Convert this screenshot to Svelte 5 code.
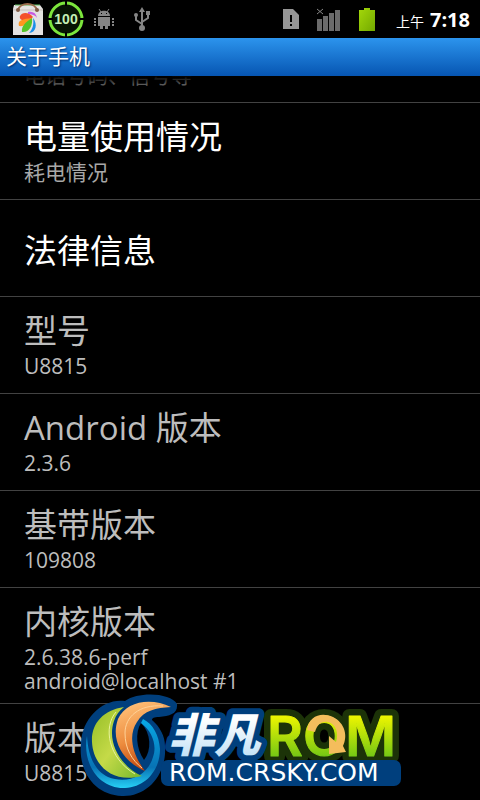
<script>
    const items = [
        { title: "", lines: ["电话号码、信号等"], action: true },
        { title: "电量使用情况", lines: ["耗电情况"], action: true },
        { title: "法律信息", lines: [], action: true },
        { title: "型号", lines: ["U8815"] },
        { title: "Android 版本", lines: ["2.3.6"] },
        { title: "基带版本", lines: ["109808"] },
        { title: "内核版本", lines: ["2.6.38.6-perf", "android@localhost #1"] },
        { title: "版本", lines: ["U8815"] },
    ];
    const ticks = [0, 90, 180, 270];
</script>

<div class="screen">
    <header class="status">
        <div class="icons">
            <svg class="bag" width="32" height="34" viewBox="0 0 32 34">
                <path d="M2 3h26l3 4v26H1V7z" fill="#e4e2e1" />
                <path d="M1 7h30v2H1z" fill="#d5d0ce" />
                <path d="M3 3h25" stroke="#5fb85f" stroke-width="1" />
                <path d="M6 8C8 0 23 0 25 8" fill="none" stroke="#9b6b4c" stroke-width="2" />
                <circle cx="6" cy="8" r="2" fill="#805a45" />
                <circle cx="25" cy="8" r="2" fill="#805a45" />
                <path d="M16 10c5-1 8 1 9 6-2-3-5-4-9-4z" fill="#c65be0" />
                <path d="M18 18C10 20 7 17 8 14C10 10 17 10 21 15z" fill="#f4502c" />
                <path d="M20 16C11 17 5 18 7 24c5 1 10-3 13-8z" fill="#ff961f" />
                <path d="M20 16c-6 4-11 8-10 14 7 1 11-6 10-14z" fill="#54c529" />
                <path d="M21 16c1 6 0 11-4 15 7 0 9-9 4-15z" fill="#1b8fe8" />
            </svg>
            <svg width="36" height="36" viewBox="0 0 36 36">
                <circle cx="18" cy="18" r="16" fill="#071403" stroke="#7ce53c" stroke-width="3" />
                {#each ticks as angle}
                    <path d="M18 0v5" stroke="#000" stroke-width="2" transform="rotate({angle} 18 18)" />
                {/each}
                <text class="charge" x="18" y="23" text-anchor="middle">100</text>
            </svg>
            <svg class="robot" width="20" height="22" viewBox="0 0 20 22" fill="#858585">
                <path d="M4 8c0-7 12-7 12 0z" />
                <path d="M5 1l2 3M15 1l-2 3" stroke="#858585" />
                <path d="M4 9h12v9H4zM6 18h3v3H6zM11 18h3v3h-3z" />
                <path d="M0 10h2v2H0zM0 13h2v2H0zM0 16h2v2H0zM18 10h2v2h-2zM18 13h2v2h-2zM18 16h2v2h-2z" />
                <path d="M7 5h1v1H7zM12 5h1v1h-1z" fill="#000" />
            </svg>
            <svg class="usb" width="16" height="24" viewBox="0 0 16 24">
                <path d="M8 4v16M8 17L2 13V8M8 15l6-4V7" fill="none" stroke="#858585" stroke-width="2" />
                <path d="M8 0l3 5H5zM12 4h4v4h-4z" fill="#858585" />
                <circle cx="2" cy="8" r="2" fill="#858585" />
                <circle cx="8" cy="21" r="3" fill="#858585" />
            </svg>
        </div>
        <div class="icons right">
            <svg width="16" height="20" viewBox="0 0 16 20">
                <path d="M0 0h10l6 6v14H0z" fill="#969696" />
                <path d="M7 6h2v7H7zM7 15h2v2H7z" fill="#000" />
            </svg>
            <svg width="24" height="23" viewBox="0 0 24 23">
                <path d="M0 11h5v12H0zM6 8h5v15H6zM12 5h5v18h-5zM18 2h5v21h-5z" fill="#6b6b6b" />
                <path d="M0 1l6 5M6 1L0 6" stroke="#858585" stroke-width="1" />
            </svg>
            <svg width="16" height="23" viewBox="0 0 16 23">
                <defs>
                    <linearGradient id="cell" x2="1" y2="1">
                        <stop offset="0" stop-color="#a4d80a" />
                        <stop offset="1" stop-color="#73a900" />
                    </linearGradient>
                </defs>
                <path d="M0 2h5V0h6v2h5v21H0z" fill="url(#cell)" />
            </svg>
            <div class="clock"><span>上午</span><b>7:18</b></div>
        </div>
    </header>

    <h1>关于手机</h1>

    <main>
        <ul>
            {#each items as item}
                <li class:action={item.action}>
                    <div class="title">{item.title}</div>
                    {#each item.lines as line}
                        <div class="summary">{line}</div>
                    {/each}
                </li>
            {/each}
        </ul>
    </main>

    <svg class="watermark" width="328" height="110" viewBox="0 0 328 110">
        <defs>
            <linearGradient id="lime" x2="1" y2="1">
                <stop offset="0" stop-color="#93bd25" />
                <stop offset="0.5" stop-color="#c5da48" />
                <stop offset="1" stop-color="#76b82c" />
            </linearGradient>
            <linearGradient id="orange" x1="0.3" x2="0.6" y2="1">
                <stop offset="0" stop-color="#ffc078" />
                <stop offset="0.5" stop-color="#ed8d3f" />
                <stop offset="1" stop-color="#b93d08" />
            </linearGradient>
            <linearGradient id="ring" x2="0" y2="1">
                <stop offset="0" stop-color="#08a9e5" />
                <stop offset="0.7" stop-color="#0873b5" />
                <stop offset="1" stop-color="#27d0f5" />
            </linearGradient>
            <linearGradient id="ice" x2="0" y2="1">
                <stop offset="0.3" stop-color="#fff" />
                <stop offset="1" stop-color="#b5dcf5" />
            </linearGradient>
            <linearGradient id="leaf" x2="0" y2="1">
                <stop offset="0.2" stop-color="#edf500" />
                <stop offset="0.8" stop-color="#77c814" />
            </linearGradient>
        </defs>
        <path
            d="M86 56C88 86 67 107 43 106C16 105-1 82 2 53C3 28 24 8 46 11C60 1 92 3 98 14C99 24 91 26 80 27C75 27 73 28 73 30C81 37 86 46 86 56z"
            fill="#003f7d"
        />
        <path d="M62 33C56 42 57 59 65 70C73 60 72 43 62 33z" fill="#000" />
        <path d="M8 46C3 74 20 99 46 98C67 97 81 80 81 59C80 45 74 34 64 29L62 33C74 42 78 56 74 67C68 88 46 94 29 87C16 81 9 66 8 46z" fill="url(#ring)" />
        <path d="M45 17C24 20 12 34 13 52C14 74 32 94 63 86C44 78 27 54 35 31C37 25 40 21 45 17z" fill="url(#lime)" />
        <path d="M37 22C24 37 29 68 56 84" fill="none" stroke="#e7f39b" stroke-width="1" />
        <path d="M92 17C72 7 47 11 39 29C31 51 45 72 66 81C53 64 49 45 58 32C65 20 77 18 92 17z" fill="url(#orange)" />
        <path d="M84 16C60 14 46 27 46 43C46 59 53 70 63 78" fill="none" stroke="#ffd298" stroke-width="1" />

        <text class="rom dark" x="188" y="66">ROM</text>
        <text class="cn edge" x="89" y="62">非凡</text>
        <rect x="82" y="70" width="240" height="26" rx="7" fill="#003f7d" />
        <text class="cn" x="89" y="62" fill="url(#ice)">非凡</text>
        <text class="rom leaf" x="188" y="66">ROM</text>
        <path
            d="M228 40C230 25 243 22 254 27C266 33 269 46 264 56L267 62L250 64L250 46L257 52C260 43 257 34 249 32C242 31 238 35 236 42z"
            fill="#f4bd5c"
        />
        <text class="site" x="90" y="91">ROM.CRSKY.COM</text>
    </svg>
</div>

<style>
    :global(body) {
        margin: 0;
        background: #000;
    }

    .screen {
        position: relative;
        display: flex;
        flex-direction: column;
        min-height: 100vh;
        overflow: hidden;
        background: #000;
        font-family: "Open Sans", "Noto Sans CJK SC", sans-serif;
    }

    .status {
        display: flex;
        align-items: center;
        justify-content: space-between;
        height: 38px;
        padding: 0 10px 0 12px;
    }

    .icons {
        display: flex;
        align-items: center;
        gap: 4px;
    }

    .robot {
        margin-left: 6px;
    }

    .usb {
        margin-left: 16px;
    }

    .right {
        gap: 18px;
    }

    .charge {
        font: bold 14px "Liberation Sans", sans-serif;
        fill: #c5efb5;
    }

    .clock {
        display: flex;
        align-items: baseline;
        gap: 6px;
        margin-left: 3px;
        color: #fff;
        font-size: 14px;
    }

    .clock b {
        font-size: 20px;
    }

    h1 {
        height: 38px;
        margin: 0;
        padding: 0 6px;
        background: linear-gradient(#2c94ed, #0655b2);
        color: #fff;
        font-size: 21px;
        font-weight: 400;
        line-height: 36px;
        text-shadow: 1px 1px 2px #002c66;
    }

    main {
        position: relative;
        overflow: hidden;
    }

    main::before {
        content: "";
        position: absolute;
        top: 0;
        width: 100%;
        height: 16px;
        background: linear-gradient(#000, transparent);
    }

    ul {
        margin: -70px 0 0;
        padding: 0;
        list-style: none;
    }

    li {
        display: flex;
        flex-direction: column;
        box-sizing: border-box;
        min-height: 97px;
        padding: 14px 24px 10px;
        border-bottom: 1px solid #424242;
        color: #bdbdbd;
    }

    li:last-child {
        border-bottom: none;
    }

    .title {
        min-height: 39px;
        margin-bottom: 4px;
        font-size: 33px;
        line-height: 39px;
    }

    .title:only-child {
        margin: auto 0;
    }

    .action .title {
        color: #fff;
    }

    .summary {
        font-size: 21px;
        line-height: 24px;
    }

    .action .summary {
        color: #a8a8a8;
    }

    .watermark {
        position: absolute;
        top: 690px;
        left: 79px;
    }

    .cn {
        font: italic 900 46px "Noto Sans CJK SC", sans-serif;
    }

    .rom {
        font: 600 55px Inter, sans-serif;
    }

    .leaf {
        fill: url(#leaf);
        stroke: url(#leaf);
        stroke-width: 1px;
        stroke-linejoin: round;
    }

    .site {
        font: 400 25px "DejaVu Sans", sans-serif;
        fill: #fff;
    }

    .edge {
        fill: #003f7d;
        stroke: #003f7d;
        stroke-width: 12px;
        stroke-linejoin: round;
    }

    .dark {
        fill: #1c3308;
        stroke: #1c3308;
        stroke-width: 14px;
        stroke-linejoin: round;
    }
</style>
